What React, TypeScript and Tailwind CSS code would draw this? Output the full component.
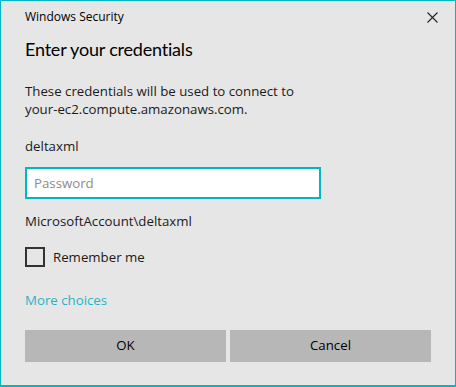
export default function App() {
  return (
    <div className="w-[456px] h-[387px] bg-[#e6e6e6] border border-b-2 border-[#00b7c3] font-['Open_Sans','Noto_Sans',sans-serif] text-[#1a1a1a] box-border">
      {/* Title bar */}
      <div className="flex items-center justify-between h-[18px] mt-[7px] pl-[24px] pr-[17px]">
        <span className="text-[12px] text-[#000]">Windows Security</span>
        <svg width="11" height="11" viewBox="0 0 11 11" className="text-[#222]">
          <path d="M0.5 0.5 L10.5 10.5 M10.5 0.5 L0.5 10.5" stroke="currentColor" strokeWidth="1.1" fill="none" />
        </svg>
      </div>

      <div className="pl-[24px] pr-[24px]">
        {/* Heading */}
        <h1 className="mt-[11px] h-[24px] leading-[24px] text-[18px] tracking-[-0.2px] font-['Lato','Open_Sans',sans-serif] text-[#000]">
          Enter your credentials
        </h1>

        {/* Message */}
        <p className="mt-[21px] text-[13.25px] leading-[18px]">
          These credentials will be used to connect to
          <br />
          your-ec2.compute.amazonaws.com.
        </p>

        <div className="mt-[19px] text-[13.25px] leading-[18px]">deltaxml</div>

        <input
          type="password"
          placeholder="Password"
          className="mt-[12px] block w-[296px] h-[32px] bg-white border-2 border-[#00b7c3] px-[7px] text-[13.25px] placeholder:text-[#8c8c8c] outline-none"
        />

        <div className="mt-[13px] text-[13.25px] leading-[18px]">MicrosoftAccount\deltaxml</div>

        {/* Remember me */}
        <label className="mt-[17px] flex items-center gap-[8px] h-[20px]">
          <span className="w-[20px] h-[20px] border-2 border-[#333]" />
          <span className="text-[13.25px] leading-[18px]">Remember me</span>
        </label>

        <a href="#" className="mt-[24px] block text-[13.25px] leading-[18px] text-[#1fb5c7]">
          More choices
        </a>

        {/* Actions */}
        <div className="mt-[21px] flex gap-[4px]">
          <button className="w-[201px] h-[32px] bg-[#b7b7b7] text-[13.25px] text-[#000]">OK</button>
          <button className="w-[201px] h-[32px] bg-[#b7b7b7] text-[13.25px] text-[#000]">Cancel</button>
        </div>
      </div>
    </div>
  );
}
